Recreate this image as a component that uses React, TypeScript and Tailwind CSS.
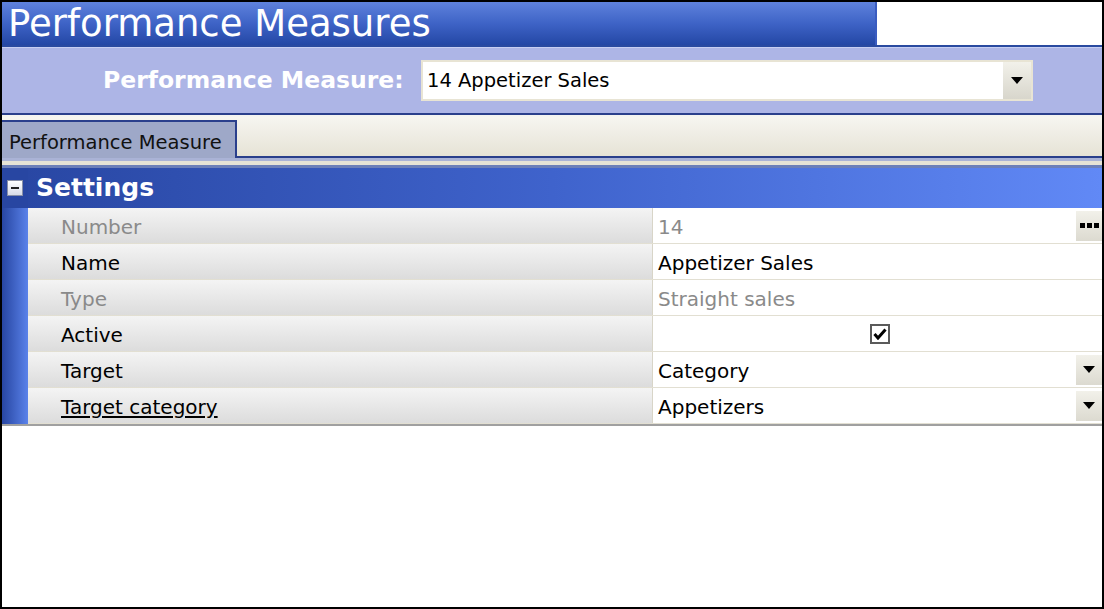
import type { ReactElement } from "react";

type Row = {
  label: string;
  value?: string;
  disabled?: boolean;
  kind?: "text" | "ellipsis" | "check" | "select";
  underline?: boolean;
};

const ROWS: Row[] = [
  { label: "Number", value: "14", disabled: true, kind: "ellipsis" },
  { label: "Name", value: "Appetizer Sales" },
  { label: "Type", value: "Straight sales", disabled: true },
  { label: "Active", kind: "check" },
  { label: "Target", value: "Category", kind: "select" },
  { label: "Target category", value: "Appetizers", kind: "select", underline: true },
];

function DropArrow(): ReactElement {
  return (
    <svg width="12" height="8" viewBox="0 0 12 8">
      <path d="M0 0h12L6 7z" fill="#000" />
    </svg>
  );
}

function PropRow({ row }: { row: Row }): ReactElement {
  const tone = row.disabled ? "text-[#8a8a8a]" : "text-black";
  return (
    <div className="flex h-[36px] border-b border-[#e2dfd2]">
      <div className="w-[625px] flex items-center pl-[33px] pt-[2px] bg-gradient-to-b from-[#f4f4f4] to-[#dcdcdc] border-r border-[#d8d5c8]">
        <span className={`${tone} ${row.underline ? "underline underline-offset-2" : ""}`}>{row.label}</span>
      </div>
      <div className="flex-1 flex items-center bg-white pl-[5px]">
        {row.kind === "check" ? (
          <div className="flex-1 flex justify-center">
            <div className="w-[20px] h-[20px] border-2 border-[#5a5a5a] bg-white flex items-center justify-center">
              <svg width="14" height="12" viewBox="0 0 14 12">
                <path d="M1.5 6l3.5 4L12.5 1.5" stroke="#000" strokeWidth="3" fill="none" />
              </svg>
            </div>
          </div>
        ) : (
          <span className={`flex-1 pt-[2px] ${tone}`}>{row.value}</span>
        )}
        {row.kind === "select" ? (
          <div className="w-[26px] h-[30px] bg-gradient-to-b from-[#f2f1ea] to-[#dcdad0] flex items-center justify-center">
            <DropArrow />
          </div>
        ) : null}
        {row.kind === "ellipsis" ? (
          <div className="w-[26px] h-[30px] bg-gradient-to-b from-[#f2f1ea] to-[#dcdad0] flex items-center justify-center gap-[2px]">
            <span className="w-[5px] h-[5px] bg-black" />
            <span className="w-[5px] h-[5px] bg-black" />
            <span className="w-[5px] h-[5px] bg-black" />
          </div>
        ) : null}
      </div>
    </div>
  );
}

export default function App(): ReactElement {
  return (
    <div className="w-[1104px] h-[609px] border-2 border-black bg-white flex flex-col overflow-hidden font-['DejaVu_Sans',sans-serif] text-[20px]">
      {/* page title */}
      <div className="flex h-[43px] shrink-0">
        <div className="w-[873px] bg-gradient-to-b from-[#5f82dc] via-[#3e63c6] to-[#2447a5] flex items-center pl-[6px]">
          <h1 className="text-white text-[37px] leading-none">Performance Measures</h1>
        </div>
        <div className="flex-1 bg-white border-l-2 border-[#3a5cc0]" />
      </div>
      <div className="h-[2px] shrink-0 bg-[#2a4aa0]" />

      {/* selector band */}
      <div className="h-[66px] shrink-0 bg-[#adb5e6] border-t border-[#c8cff2] flex items-center">
        <span className="ml-[101px] w-[302px] text-white font-bold text-[23.5px]">Performance Measure:</span>
        <div className="ml-[16px] w-[612px] h-[41px] border-2 border-[#e8e4d4] bg-white flex items-center">
          <span className="flex-1 pl-[4px] text-black text-[19.5px]">14 Appetizer Sales</span>
          <div className="w-[28px] h-full bg-gradient-to-b from-[#f2f1ea] to-[#d8d6cc] flex items-center justify-center">
            <DropArrow />
          </div>
        </div>
      </div>
      <div className="h-[2px] shrink-0 bg-[#2a3f8c]" />
      <div className="h-[2px] shrink-0 bg-[#f4f4f0]" />

      {/* tab strip */}
      <div className="h-[41px] shrink-0 flex items-end bg-gradient-to-b from-[#f6f5f0] to-[#e6e3d6] border-b-2 border-[#2a3f8c]">
        <div className="w-[235px] h-[38px] bg-[#9ea8c8] border-t-2 border-r-2 border-[#2a3f8c] flex items-center pl-[7px] pt-[6px] -mb-[2px]">
          <span className="text-[#111] text-[19.5px]">Performance Measure</span>
        </div>
      </div>
      <div className="h-[3px] shrink-0 bg-[#aab3d6]" />
      <div className="h-[4px] shrink-0 bg-[#e6e3d6]" />
      <div className="h-[3px] shrink-0 bg-[#6c7fb8]" />

      {/* settings category */}
      <div className="h-[40px] shrink-0 flex items-center bg-gradient-to-r from-[#2846a2] via-[#3f63cc] to-[#6189f6]">
        <div className="w-[26px] h-full bg-[#2846a2] flex items-center justify-center">
          <div className="w-[16px] h-[16px] bg-gradient-to-b from-white to-[#d8dce8] border border-[#8890a8] flex items-center justify-center">
            <span className="w-[8px] h-[2px] bg-[#222]" />
          </div>
        </div>
        <span className="ml-[8px] text-white font-bold text-[25px]">Settings</span>
      </div>

      {/* property rows */}
      <div className="flex shrink-0 border-b-2 border-[#a0a0a0]">
        <div className="w-[26px] bg-gradient-to-r from-[#2846a2] to-[#5a82ea]" />
        <div className="flex-1 flex flex-col">
          {ROWS.map((r) => (
            <PropRow key={r.label} row={r} />
          ))}
        </div>
      </div>
      <div className="flex-1 bg-white" />
    </div>
  );
}
